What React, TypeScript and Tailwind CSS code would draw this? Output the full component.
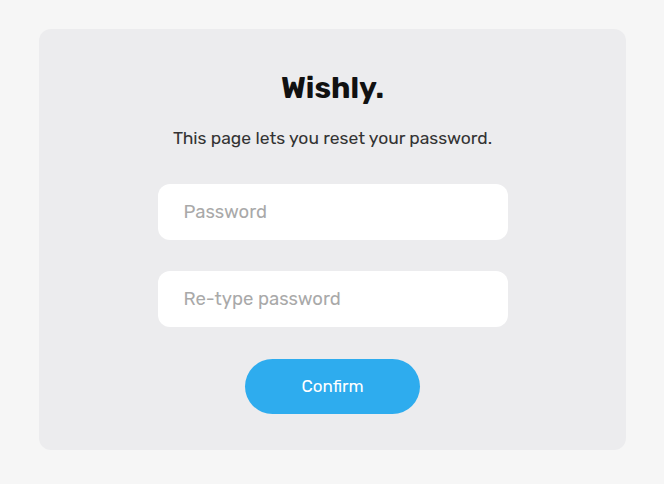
export default function App() {
  return (
    <div className="min-h-screen w-full bg-[#f6f6f6] pl-[39px] pr-[38px] pt-[29px] pb-[34px] font-['Rubik','Noto_Sans',sans-serif]">
      <div className="flex h-[421px] flex-col items-center rounded-xl bg-[#ececee] pt-[41px]">
        <h1 className="text-[30px] font-bold leading-[36px] text-[#111]">Wishly.</h1>
        <p className="mt-[21px] text-[17.5px] leading-[22px] text-[#333]">
          This page lets you reset your password.
        </p>
        <form className="mt-[35px] flex w-[350px] flex-col items-center gap-[31px]">
          <input
            type="password"
            placeholder="Password"
            className="h-[56px] w-full rounded-xl bg-white px-[26px] text-[18.5px] text-[#333] outline-none placeholder:text-[#a9a9a9]"
          />
          <input
            type="password"
            placeholder="Re-type password"
            className="h-[56px] w-full rounded-xl bg-white px-[26px] text-[18.5px] text-[#333] outline-none placeholder:text-[#a9a9a9]"
          />
          <button
            type="button"
            className="mt-px h-[55px] w-[175px] rounded-full bg-[#2eacee] text-[17px] text-white"
          >
            Confirm
          </button>
        </form>
      </div>
    </div>
  );
}
